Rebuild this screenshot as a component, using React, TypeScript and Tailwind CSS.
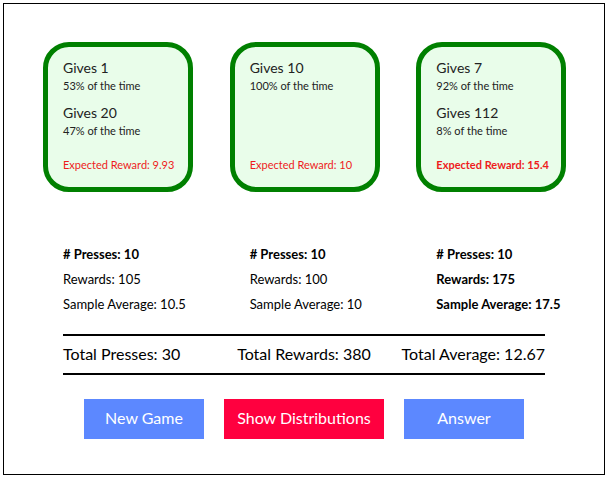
const arms = [
  {
    outcomes: [
      { value: 1, pct: 53 },
      { value: 20, pct: 47 },
    ],
    expected: "9.93",
    presses: 10,
    rewards: 105,
    average: "10.5",
    best: false,
  },
  {
    outcomes: [{ value: 10, pct: 100 }],
    expected: "10",
    presses: 10,
    rewards: 100,
    average: "10",
    best: false,
  },
  {
    outcomes: [
      { value: 7, pct: 92 },
      { value: 112, pct: 8 },
    ],
    expected: "15.4",
    presses: 10,
    rewards: 175,
    average: "17.5",
    best: true,
  },
];

const App = () => {
  return (
    <div className="ml-[3px] mt-[3px] w-[602px] h-[472px] border border-black bg-white text-black font-['Lato','Liberation_Sans',sans-serif]">
      {/* machines */}
      <div className="ml-[39px] mt-[38px] w-[560px] grid grid-cols-3">
        {arms.map((arm, i) => (
          <div
            key={i}
            className="w-[150px] h-[150px] rounded-[26px] border-[5px] border-[#008000] bg-[#e9fdea] pl-[15px] pt-[11px] pb-[13px] flex flex-col text-[#222]"
          >
            {arm.outcomes.map((o) => (
              <div key={o.value} className="mb-[8px]">
                <div className="text-[14px] leading-[19px]">Gives {o.value}</div>
                <div className="text-[11px] leading-[18px]">{o.pct}% of the time</div>
              </div>
            ))}
            <div
              className={
                "mt-auto text-[11px] leading-[18px] text-[#ee1c1c] " +
                (arm.best ? "font-bold" : "")
              }
            >
              Expected Reward: {arm.expected}
            </div>
          </div>
        ))}
      </div>

      {/* per-machine stats */}
      <div className="ml-[39px] mt-[50px] w-[560px] grid grid-cols-3 text-[13px] leading-[25px]">
        {arms.map((arm, i) => (
          <div key={i} className="pl-[20px]">
            <div className="font-bold"># Presses: {arm.presses}</div>
            <div className={arm.best ? "font-bold" : ""}>Rewards: {arm.rewards}</div>
            <div className={arm.best ? "font-bold" : ""}>Sample Average: {arm.average}</div>
          </div>
        ))}
      </div>

      {/* totals */}
      <div className="mx-auto mt-[17px] w-[482px] border-y-2 border-black grid grid-cols-3 text-[16px] leading-[35px] pb-[2px] whitespace-nowrap">
        <div className="justify-self-start">Total Presses: 30</div>
        <div className="justify-self-center">Total Rewards: 380</div>
        <div className="justify-self-end">Total Average: 12.67</div>
      </div>

      {/* actions */}
      <div className="mt-[24px] flex justify-center gap-[20px] text-[16px] text-white">
        <button className="w-[120px] h-[40px] pb-[2px] bg-[#5c88ff]">New Game</button>
        <button className="w-[160px] h-[40px] pb-[2px] bg-[#ff003f]">Show Distributions</button>
        <button className="w-[120px] h-[40px] pb-[2px] bg-[#5c88ff]">Answer</button>
      </div>
    </div>
  );
};

export default App;
